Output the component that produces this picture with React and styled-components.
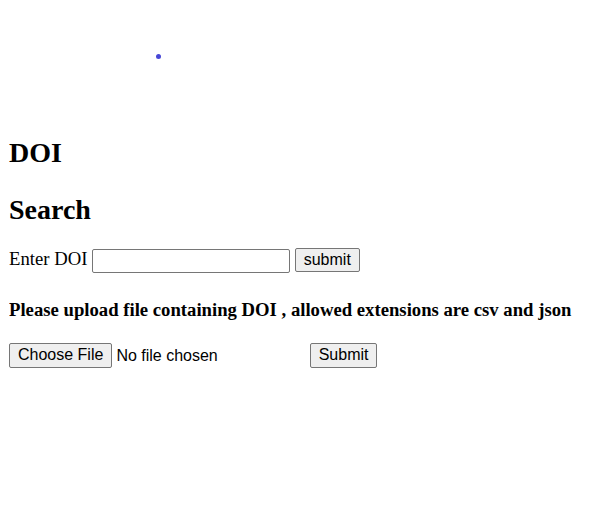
import React, { useState } from "react";
import styled, { createGlobalStyle } from "styled-components";

const GlobalStyle = createGlobalStyle`
  body {
    margin: 9px;
    font-family: "Liberation Serif", "Times New Roman", serif;
    font-size: 18.7px;
    background: #fff;
    color: #000;
  }
`;

const App = () => {
  const [doi, setDoi] = useState("");

  return (
    <>
      <GlobalStyle />
      <Loader>
        <Dot />
      </Loader>
      <Title>DOI</Title>
      <SubTitle>Search</SubTitle>
      <SearchForm onSubmit={(e) => e.preventDefault()}>
        <label htmlFor="doi">Enter DOI</label>{" "}
        <TextInput id="doi" type="text" value={doi} onChange={(e) => setDoi(e.target.value)} />{" "}
        <Button type="submit">submit</Button>
      </SearchForm>
      <UploadHint>Please upload file containing DOI , allowed extensions are csv and json</UploadHint>
      <UploadForm onSubmit={(e) => e.preventDefault()}>
        <FileInput type="file" accept=".csv,.json" />{" "}
        <Button type="submit" $tall>Submit</Button>
      </UploadForm>
    </>
  );
};

export default App;

const Loader = styled.div`
  height: 103px;
  padding: 45px 0 0 147px;
  box-sizing: border-box;
`;

const Dot = styled.div`
  width: 5px;
  height: 5px;
  border-radius: 50%;
  background-color: #4747d6;
`;

const Title = styled.h1`
  font-size: 28px;
  margin: 25px 0;
`;

const SubTitle = styled.h2`
  font-size: 28px;
  margin: 25px 0 22px;
`;

const SearchForm = styled.form`
  margin: 0;
`;

const TextInput = styled.input`
  width: 198px;
  height: 24px;
  box-sizing: border-box;
  padding: 1px 2px;
  border: 1px solid #767676;
  border-radius: 2px;
  font-size: 13px;
  font-family: "Liberation Sans", Arial, sans-serif;
`;

const Button = styled.button`
  font-family: "Liberation Sans", Arial, sans-serif;
  font-size: 16px;
  height: ${(p) => (p.$tall ? "25px" : "24px")};
  padding: 1px 8px;
  background-color: #efefef;
  border: 1px solid #767676;
  border-radius: 2px;
  color: #000;
`;

const UploadHint = styled.h4`
  font-size: 18.7px;
  margin: 26px 0 22px;
`;

const UploadForm = styled.form`
  margin: 0;
`;

const FileInput = styled.input`
  font-family: "Liberation Sans", Arial, sans-serif;
  font-size: 16px;
  width: 296px;

  &::file-selector-button {
    font-family: "Liberation Sans", Arial, sans-serif;
    font-size: 16px;
    height: 25px;
    padding: 1px 8px;
    margin-right: 4px;
    background-color: #efefef;
    border: 1px solid #767676;
    border-radius: 2px;
    color: #000;
  }
`;
